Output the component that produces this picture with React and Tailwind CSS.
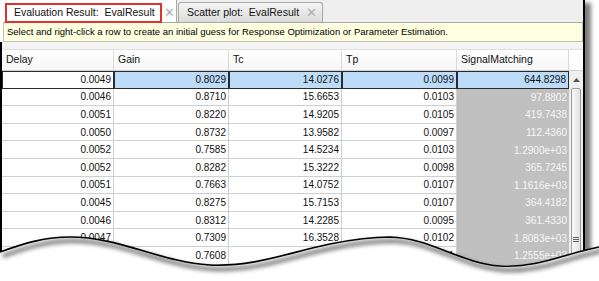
import React from 'react'

const rows = [
  ['0.0049', '0.8029', '14.0276', '0.0099', '644.8298'],
  ['0.0046', '0.8710', '15.6653', '0.0103', '97.8802'],
  ['0.0051', '0.8220', '14.9205', '0.0105', '419.7438'],
  ['0.0050', '0.8732', '13.9582', '0.0097', '112.4360'],
  ['0.0052', '0.7585', '14.5234', '0.0103', '1.2900e+03'],
  ['0.0052', '0.8282', '15.3222', '0.0098', '365.7245'],
  ['0.0051', '0.7663', '14.0752', '0.0107', '1.1616e+03'],
  ['0.0045', '0.8275', '15.7153', '0.0107', '364.4182'],
  ['0.0046', '0.8312', '14.2285', '0.0095', '361.4330'],
  ['0.0047', '0.7309', '16.3528', '0.0102', '1.8083e+03'],
  ['0.0049', '0.7608', '14.8841', '0.0101', '1.2555e+03'],
]

// widths per column, written out so tailwind picks them up
const colW = ['w-[112px]', 'w-[115px]', 'w-[113px]', 'w-[115px]', 'w-[112px]']
const headers = ['Delay', 'Gain', 'Tc', 'Tp', 'SignalMatching']

const Cell = ({ value, col, row }) => {
  const selected = row === 0
  let cls = 'h-full flex items-center justify-end pr-[2px] shrink-0 box-border '
  if (selected) {
    cls += col === 0 ? 'bg-white border border-[#2a2a2a] text-[#111111]' : 'bg-[#bcdcf8] border border-[#2a2a2a] text-[#111111]'
  } else if (col === 4) {
    cls += 'bg-[#c0c0c0] text-[#f6f6f6]'
  } else {
    cls += 'border-r border-b border-[#cfcfcf] text-[#111111]'
  }
  return <div className={cls + ' ' + colW[col]}>{value}</div>
}

const TornEdge = () => {
  const curve =
    'M0,252 C25,243 45,237 70,237 C120,237 160,262 210,265 C255,267 290,252 330,244 C355,239 370,237 390,237 C430,238 460,263 500,266 C535,268 560,256 586,250 L599,247'
  return (
    <svg className="absolute left-0 top-0 pointer-events-none" width="599" height="281" viewBox="0 0 599 281">
      <defs>
        <filter id="blur" x="-5%" y="-50%" width="110%" height="200%">
          <feGaussianBlur stdDeviation="2" />
        </filter>
      </defs>
      <path d={curve + ' L599,281 L0,281 Z'} fill="#ffffff" />
      <path d={curve} transform="translate(3,4)" fill="none" stroke="#3a3a3a" strokeWidth="4" opacity="0.7" filter="url(#blur)" />
      <path d={curve} fill="none" stroke="#000000" strokeWidth="1.6" />
    </svg>
  )
}

export default function App() {
  return (
    <div className="relative w-[599px] h-[281px] overflow-hidden bg-white" style={{ fontFamily: '"Liberation Sans", Arial, sans-serif' }}>
      <div className="w-[585px] h-full flex flex-col border-r-2 border-black shadow-[6px_3px_4px_rgba(0,0,0,0.5)] bg-white">
        {/* tab strip */}
        <div className="h-[23px] shrink-0 flex items-stretch pl-[3px] bg-white">
          <div className="flex-1 flex items-stretch border-b border-[#a8a8a8] bg-[#eeeeee]">
            <div className="w-[174px] bg-white flex items-start pt-[3px] border-r border-[#a8a8a8]">
              <div className="ml-[2px] h-[20px] w-[157px] border-2 border-[#e2302c] flex items-center pl-[7px] text-[10.5px] text-[#111111] whitespace-pre">
                Evaluation Result:  EvalResult
              </div>
              <span className="ml-[2px] mt-[1px] text-[13px] leading-[18px] text-[#adadad]">✕</span>
            </div>
            <div className="ml-[1px] mt-[2px] w-[145px] rounded-t-[3px] border border-b-0 border-[#a8a8a8] bg-gradient-to-b from-[#f4f4f4] to-[#dcdcdc] flex items-center pl-[8px] text-[10.5px] text-[#111111] whitespace-pre">
              <span>Scatter plot:  EvalResult</span>
              <span className="ml-auto mr-[5px] text-[13px] text-[#adadad]">✕</span>
            </div>
          </div>
        </div>

        {/* info bar */}
        <div className="pl-[3px] bg-white shrink-0">
          <div className="h-[19px] bg-[#ffffe1] border border-t-0 border-[#c4c4ac] flex items-center pl-[3px] text-[9.5px] text-[#000000]">
            Select and right-click a row to create an initial guess for Response Optimization or Parameter Estimation.
          </div>
        </div>

        {/* table */}
        <div className="flex-1 flex flex-col border-l-2 border-black bg-white">
          <div className="h-[8px] shrink-0 bg-[#f4f4f4] border-b border-[#dedede]" />
          <div className="flex flex-1">
            <div className="flex flex-col">
              <div className="h-[21px] flex border-b border-[#d2d2d2] bg-gradient-to-b from-white to-[#f6f6f6]">
                {headers.map((h, i) => (
                  <div key={h} className={colW[i] + ' shrink-0 h-full flex items-center pl-[4px] text-[10.5px] text-[#111111] border-r border-[#dadada]'}>
                    {h}
                  </div>
                ))}
              </div>
              {rows.map((r, ri) => (
                <div key={ri} className="h-[17.6px] flex text-[10px]">
                  {r.map((v, ci) => (
                    <Cell key={ci} value={v} col={ci} row={ri} />
                  ))}
                </div>
              ))}
            </div>

            {/* scrollbar */}
            <div className="flex-1 flex flex-col bg-[#f0f0f0]">
              <div className="h-[21px] bg-white border-b border-[#d2d2d2]" />
              <div className="h-[17px] flex items-center justify-center">
                <svg width="7" height="4" viewBox="0 0 7 4">
                  <path d="M0,4 L3.5,0 L7,4 Z" fill="#555555" />
                </svg>
              </div>
              <div className="flex-1 mx-[2px] border border-[#9c9c9c] rounded-[2px] bg-gradient-to-r from-[#f8f8f8] to-[#e2e2e2] flex flex-col items-center pt-[148px] gap-[1px]">
                <div className="w-[6px] h-[1px] bg-[#606060]" />
                <div className="w-[6px] h-[1px] bg-[#606060]" />
                <div className="w-[6px] h-[1px] bg-[#606060]" />
              </div>
            </div>
          </div>
        </div>
      </div>
      <TornEdge />
    </div>
  )
}
